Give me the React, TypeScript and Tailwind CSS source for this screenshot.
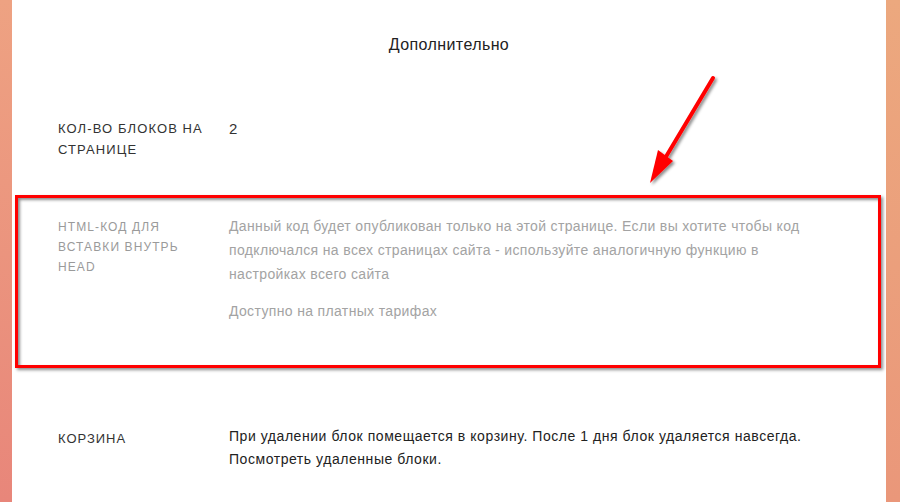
import React from 'react'

const font = { fontFamily: '"Liberation Sans", Arial, sans-serif' }

export default function App() {
  return (
    <div className="relative w-[900px] h-[502px] overflow-hidden flex bg-gradient-to-b from-[#eea282] to-[#e8867a]" style={font}>
      <div className="w-[12px] shrink-0" />
      <main className="flex-1 bg-white pt-[33px]">
        <h2 className="text-center text-[16px] leading-[24px] tracking-[0.4px] text-[#222]">Дополнительно</h2>

        <div className="mt-[61px] flex text-[#333]">
          <div className="w-[217px] pl-[46px] text-[13px] leading-[21px] tracking-[1.1px] uppercase">
            Кол-во блоков на
            <br />
            странице
          </div>
          <div className="text-[15px] leading-[21px]">2</div>
        </div>

        <div className="mt-[54px] flex">
          <div className="w-[217px] pl-[46px] pt-[3px] text-[12px] leading-[20px] tracking-[1.1px] uppercase text-[#9a9a9a]">
            HTML-код для
            <br />
            вставки внутрь
            <br />
            head
          </div>
          <div className="text-[14px] leading-[24px] text-[#a3a3a3] tracking-[0.35px]">
            <p>
              Данный код будет опубликован только на этой странице. Если вы хотите чтобы код
              <br />
              подключался на всех страницах сайта - используйте аналогичную функцию в
              <br />
              настройках всего сайта
            </p>
            <p className="mt-[13px]">Доступно на платных тарифах</p>
          </div>
        </div>

        <div className="mt-[102px] flex text-[#222]">
          <div className="w-[217px] pl-[46px] pt-[3px] text-[13px] leading-[21px] tracking-[1px] uppercase text-[#333]">Корзина</div>
          <div className="text-[14px] leading-[23px] tracking-[0.55px]">
            При удалении блок помещается в корзину. После 1 дня блок удаляется навсегда.
            <br />
            Посмотреть удаленные блоки.
          </div>
        </div>
      </main>
      <div className="w-[14px] shrink-0 bg-gradient-to-b from-[#eca87e] to-[#ea977a]" />

      {/* annotation overlay */}
      <div className="absolute left-[15px] top-[195px] w-[866px] h-[173px] border-[3px] border-[#ff0000] shadow-[2px_2px_3px_rgba(0,0,0,0.45),inset_2px_2px_3px_rgba(0,0,0,0.45)] pointer-events-none" />
      <svg className="absolute inset-0 pointer-events-none" width="900" height="502" viewBox="0 0 900 502">
        <defs>
          <filter id="sh" x="-20%" y="-20%" width="140%" height="140%">
            <feDropShadow dx="2" dy="2" stdDeviation="1.5" floodColor="#000" floodOpacity="0.45" />
          </filter>
        </defs>
        <g filter="url(#sh)">
          <line x1="713" y1="78" x2="664" y2="160" stroke="#ff0000" strokeWidth="4" strokeLinecap="round" />
          <polygon points="650,183 658,150 673,161" fill="#ff0000" />
        </g>
      </svg>
    </div>
  )
}
